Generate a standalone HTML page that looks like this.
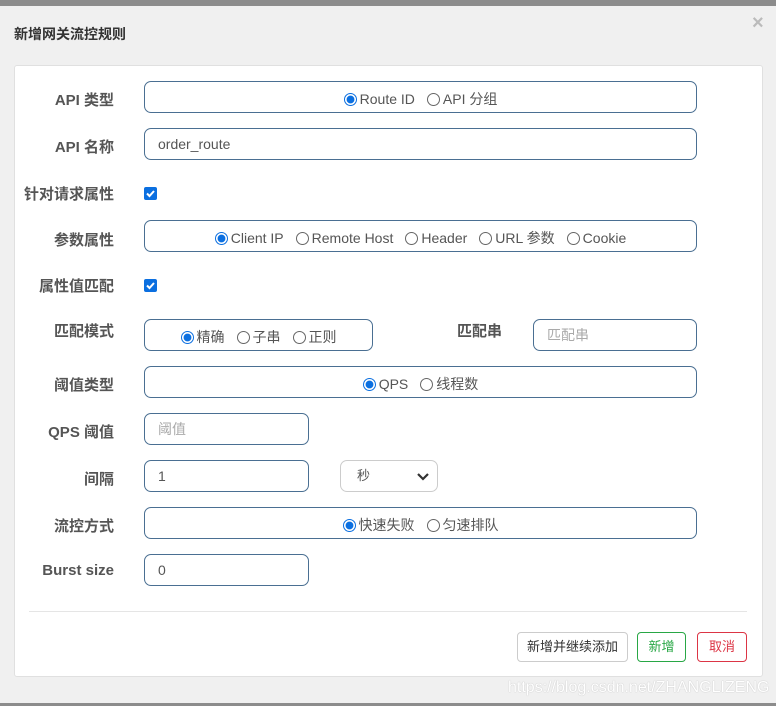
<!DOCTYPE html>
<html><head><meta charset="utf-8"><style>
*{box-sizing:border-box;margin:0;padding:0}
body{width:776px;height:706px;background:#f0f0f0;position:relative;overflow:hidden;font-family:"Liberation Sans","Noto Sans CJK SC",sans-serif;font-size:14px;color:#333}
.a{position:absolute}
.top{left:0;top:0;width:776px;height:6px;background:#8c8c8c}
.bot{left:0;top:703px;width:776px;height:3px;background:#8c8c8c}
.title{left:14px;top:24px;font-size:14px;font-weight:bold;color:#333}
.x{left:752px;top:12px;font-size:20px;color:#bbb;font-weight:bold}
.panel{left:14px;top:65px;width:749px;height:612px;background:#fff;border:1px solid #e0e0e0;border-radius:3px}
.lb{width:110px;left:4px;text-align:right;font-weight:bold;color:#555;font-size:15px}
.in{border:1px solid #4a6f92;border-radius:7px;height:32px;background:#fff;display:flex;align-items:center;padding-left:13px;font-size:14px;color:#555}
.ph{color:#aaa}
.rg{justify-content:center;padding-left:0;padding-top:4px}
.r{display:inline-flex;align-items:center;margin-right:12px;color:#555}
.r:last-child{margin-right:0}
.r i{display:inline-block;width:13px;height:13px;border:1px solid #666;border-radius:50%;margin-right:3px;background:#fff}
.r i.on{border:1px solid #0b6fe0;background:radial-gradient(circle,#0b6fe0 0 3.6px,#fff 4.2px)}
.cb{width:13px;height:13px;background:#0b6fe0;border-radius:2px}
.sel{left:340px;top:460px;width:98px;height:32px;border:1px solid #ccc;border-radius:7px;padding-left:16px;line-height:30px;color:#555;font-size:13px}
.btn{top:632px;height:30px;border:1px solid #ccc;border-radius:4px;text-align:center;line-height:28px;font-size:13px;background:#fff}
</style></head><body>
<div class="a top"></div>
<div class="a title">新增网关流控规则</div>
<div class="a x">×</div>
<div class="a panel"></div>

<div class="a lb" style="top:89px">API 类型</div>
<div class="a in rg" style="left:144px;top:81px;width:553px"><span class="r"><i class="on"></i>Route ID</span><span class="r"><i></i>API 分组</span></div>

<div class="a lb" style="top:136px">API 名称</div>
<div class="a in" style="left:144px;top:128px;width:553px">order_route</div>

<div class="a lb" style="top:183px">针对请求属性</div>
<div class="a cb" style="left:144px;top:187px"><svg width="13" height="13" viewBox="0 0 13 13"><path d="M3 6.5l2.5 2.5 4.5-5" stroke="#fff" stroke-width="2" fill="none"/></svg></div>

<div class="a lb" style="top:229px">参数属性</div>
<div class="a in rg" style="left:144px;top:220px;width:553px"><span class="r"><i class="on"></i>Client IP</span><span class="r"><i></i>Remote Host</span><span class="r"><i></i>Header</span><span class="r"><i></i>URL 参数</span><span class="r"><i></i>Cookie</span></div>

<div class="a lb" style="top:275px">属性值匹配</div>
<div class="a cb" style="left:144px;top:279px"><svg width="13" height="13" viewBox="0 0 13 13"><path d="M3 6.5l2.5 2.5 4.5-5" stroke="#fff" stroke-width="2" fill="none"/></svg></div>

<div class="a lb" style="top:320px">匹配模式</div>
<div class="a in rg" style="left:144px;top:319px;width:229px"><span class="r"><i class="on"></i>精确</span><span class="r"><i></i>子串</span><span class="r"><i></i>正则</span></div>
<div class="a" style="left:457px;top:320px;font-weight:bold;color:#555;font-size:15px">匹配串</div>
<div class="a in ph" style="left:533px;top:319px;width:164px">匹配串</div>

<div class="a lb" style="top:374px">阈值类型</div>
<div class="a in rg" style="left:144px;top:366px;width:553px"><span class="r"><i class="on"></i>QPS</span><span class="r"><i></i>线程数</span></div>

<div class="a lb" style="top:421px">QPS 阈值</div>
<div class="a in ph" style="left:144px;top:413px;width:165px">阈值</div>

<div class="a lb" style="top:468px">间隔</div>
<div class="a in" style="left:144px;top:460px;width:165px">1</div>
<div class="a sel">秒<svg class="a" style="left:76px;top:11px" width="12" height="9" viewBox="0 0 12 9"><path d="M1 2l5 5 5-5" stroke="#333" stroke-width="2.2" fill="none"/></svg></div>

<div class="a lb" style="top:515px">流控方式</div>
<div class="a in rg" style="left:144px;top:507px;width:553px"><span class="r"><i class="on"></i>快速失败</span><span class="r"><i></i>匀速排队</span></div>

<div class="a lb" style="top:562px">Burst size</div>
<div class="a in" style="left:144px;top:554px;width:165px">0</div>

<div class="a" style="left:29px;top:611px;width:718px;height:1px;background:#e5e5e5"></div>
<div class="a btn" style="left:517px;width:111px;color:#333">新增并继续添加</div>
<div class="a btn" style="left:637px;width:49px;color:#28a745;border-color:#28a745">新增</div>
<div class="a btn" style="left:697px;width:50px;color:#dc3545;border-color:#dc3545">取消</div>
<div class="a" style="left:508px;top:679px;font-size:16px;color:#fff;text-shadow:0 0 1px #aaa">https://blog.csdn.net/ZHANGLIZENG</div>
<div class="a bot"></div>
</body></html>
